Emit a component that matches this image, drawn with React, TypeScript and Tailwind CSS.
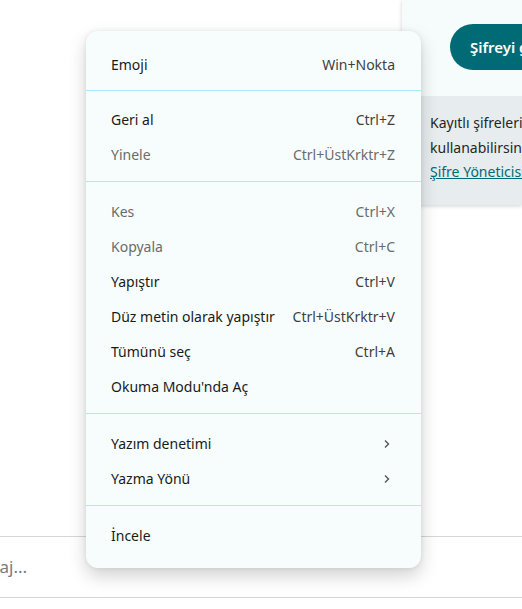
import React from "react";

type Item = { label: string; shortcut?: string; disabled?: boolean; sub?: boolean };

const groups: Item[][] = [
  [{ label: "Emoji", shortcut: "Win+Nokta" }],
  [
    { label: "Geri al", shortcut: "Ctrl+Z" },
    { label: "Yinele", shortcut: "Ctrl+ÜstKrktr+Z", disabled: true },
  ],
  [
    { label: "Kes", shortcut: "Ctrl+X", disabled: true },
    { label: "Kopyala", shortcut: "Ctrl+C", disabled: true },
    { label: "Yapıştır", shortcut: "Ctrl+V" },
    { label: "Düz metin olarak yapıştır", shortcut: "Ctrl+ÜstKrktr+V" },
    { label: "Tümünü seç", shortcut: "Ctrl+A" },
    { label: "Okuma Modu'nda Aç" },
  ],
  [
    { label: "Yazım denetimi", sub: true },
    { label: "Yazma Yönü", sub: true },
  ],
  [{ label: "İncele" }],
];

function Chevron() {
  return (
    <svg width="10" height="10" viewBox="0 0 10 10" className="mr-[3px]">
      <path d="M3 1.5 L6.5 5 L3 8.5" fill="none" stroke="#555" strokeWidth="1.4" />
    </svg>
  );
}

export default function App() {
  return (
    <div
      className="relative w-[522px] h-[609px] overflow-hidden bg-white"
      style={{ fontFamily: '"Noto Sans", "Open Sans", sans-serif' }}
    >
      {/* top section */}
      <div className="flex h-[205px]">
        <div className="flex-1" />
        <div className="w-[120px] flex flex-col bg-[#f6fbfc] shadow-[0_1px_4px_rgba(0,0,0,0.18)]">
          <div className="h-[96px] pl-[48px] pt-[24px]">
            <div className="h-[46px] w-[120px] rounded-l-full bg-[#006b75] text-white font-semibold text-[15px] flex items-center pl-[20px] whitespace-nowrap">
              Şifreyi göster
            </div>
          </div>
          <div className="flex-1 bg-[#e7ecee] pl-[28px] pt-[15px] text-[14px] leading-[24.5px] text-[#262626] whitespace-nowrap overflow-hidden">
            <div>Kayıtlı şifrelerinizi</div>
            <div>kullanabilirsiniz</div>
            <div className="text-[#006b75] underline">Şifre Yöneticisi</div>
          </div>
        </div>
      </div>

      {/* bottom input area */}
      <div className="mt-[331px] border-t border-[#d6d6d6] h-[61px] flex items-center text-[17px] text-[#7a7a7a] -ml-[61px] whitespace-nowrap">
        Bir mesaj...
      </div>
      <div className="border-t border-[#d6d6d6]" />

      {/* context menu */}
      <div className="absolute left-[86px] top-[31px] w-[335px] rounded-[12px] bg-[#f7fdfd] shadow-[0_8px_18px_rgba(0,0,0,0.18),0_0_5px_rgba(0,0,0,0.08)] pt-[16px] pb-[15px] text-[14px]">
        {groups.map((g, gi) => (
          <div key={gi}>
            {gi > 0 && <div className={"h-px bg-[#a6ebf5] " + (gi === 1 ? "mb-[11px]" : "mb-[12px]")} />}
            <div className={gi === 0 ? "pb-[8px]" : gi < groups.length - 1 ? "pb-[9px]" : ""}>
              {g.map((it) => (
                <div key={it.label} className="h-[35px] flex items-center justify-between pl-[25px] pr-[26px] whitespace-nowrap">
                  <span className={it.disabled ? "text-[#6b6b6b]" : "text-[#1a1a1a]"}>{it.label}</span>
                  {it.shortcut && (
                    <span className={it.disabled ? "text-[#6b6b6b]" : "text-[#3f3f3f]"}>{it.shortcut}</span>
                  )}
                  {it.sub && <Chevron />}
                </div>
              ))}
            </div>
          </div>
        ))}
      </div>
    </div>
  );
}
